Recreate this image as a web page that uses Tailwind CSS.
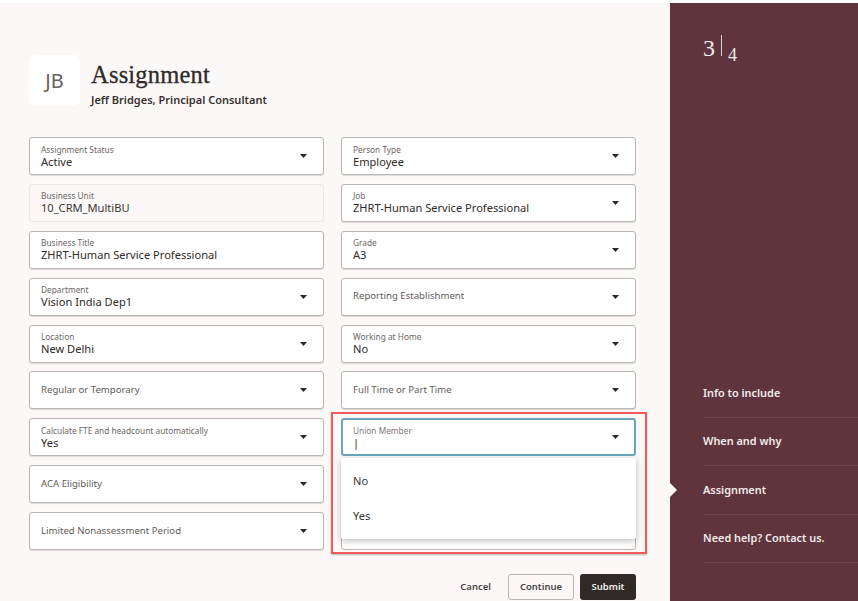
<!DOCTYPE html>
<html>
<head>
<meta charset="utf-8">
<script src="https://cdn.jsdelivr.net/npm/@tailwindcss/browser@4"></script>
</head>
<body class="bg-white">
<div class="relative w-[858px] h-[601px] overflow-hidden pt-[3px] font-['Noto_Sans','Lato',sans-serif]">
  <div class="flex h-[598px]">
    <main class="w-[670px] bg-[#fbf8f7] pl-[29px] pr-[34px] pt-[52px] flex flex-col">
      <header class="flex items-start h-[51px] gap-[11px]">
        <div class="w-[51px] h-[51px] rounded-md bg-white flex items-center justify-center text-[20px] text-[#65605d] pt-px">JB</div>
        <div class="flex flex-col mt-[6px]">
          <h1 class="font-['Liberation_Serif',serif] text-[24.5px] leading-[28px] text-[#2f2a28] tracking-[0.2px] [-webkit-text-stroke:0.3px_#2f2a28]">Assignment</h1>
          <p class="mt-[3px] text-[11px] leading-[16px] font-semibold text-[#36312f]">Jeff Bridges, Principal Consultant</p>
        </div>
      </header>

      <div class="grid grid-cols-2 gap-x-[17px] gap-y-[8.9px] mt-[31px]">
        <div class="h-[38px] rounded-[3px] border border-[#bab6b3] bg-white shadow-[0_1px_1px_rgba(0,0,0,0.12)] flex items-center pl-[11px] pr-[16px]"><div class="flex-1 min-w-0"><div class="text-[8.3px] leading-[10px] text-[#6b6663]">Assignment Status</div><div class="text-[11.1px] leading-[13px] text-[#2f2a28]">Active</div></div><svg class="w-[7px] h-[4px]" viewBox="0 0 7 4"><path d="M0 0h7L3.5 4z" fill="#2a2725"/></svg></div>
        <div class="h-[38px] rounded-[3px] border border-[#bab6b3] bg-white shadow-[0_1px_1px_rgba(0,0,0,0.12)] flex items-center pl-[11px] pr-[16px]"><div class="flex-1 min-w-0"><div class="text-[8.3px] leading-[10px] text-[#6b6663]">Person Type</div><div class="text-[11.1px] leading-[13px] text-[#2f2a28]">Employee</div></div><svg class="w-[7px] h-[4px]" viewBox="0 0 7 4"><path d="M0 0h7L3.5 4z" fill="#2a2725"/></svg></div>

        <div class="h-[38px] rounded-[3px] border border-[#ebe8e5] bg-[#fbf8f7] flex items-center pl-[11px] pr-[16px]"><div class="flex-1 min-w-0"><div class="text-[8.3px] leading-[10px] text-[#6b6663]">Business Unit</div><div class="text-[11.1px] leading-[13px] text-[#3a3533]">10_CRM_MultiBU</div></div></div>
        <div class="h-[38px] rounded-[3px] border border-[#bab6b3] bg-white shadow-[0_1px_1px_rgba(0,0,0,0.12)] flex items-center pl-[11px] pr-[16px]"><div class="flex-1 min-w-0"><div class="text-[8.3px] leading-[10px] text-[#6b6663]">Job</div><div class="text-[11.1px] leading-[13px] text-[#2f2a28]">ZHRT-Human Service Professional</div></div><svg class="w-[7px] h-[4px]" viewBox="0 0 7 4"><path d="M0 0h7L3.5 4z" fill="#2a2725"/></svg></div>

        <div class="h-[38px] rounded-[3px] border border-[#bab6b3] bg-white shadow-[0_1px_1px_rgba(0,0,0,0.12)] flex items-center pl-[11px] pr-[16px]"><div class="flex-1 min-w-0"><div class="text-[8.3px] leading-[10px] text-[#6b6663]">Business Title</div><div class="text-[11.1px] leading-[13px] text-[#2f2a28]">ZHRT-Human Service Professional</div></div></div>
        <div class="h-[38px] rounded-[3px] border border-[#bab6b3] bg-white shadow-[0_1px_1px_rgba(0,0,0,0.12)] flex items-center pl-[11px] pr-[16px]"><div class="flex-1 min-w-0"><div class="text-[8.3px] leading-[10px] text-[#6b6663]">Grade</div><div class="text-[11.1px] leading-[13px] text-[#2f2a28]">A3</div></div><svg class="w-[7px] h-[4px]" viewBox="0 0 7 4"><path d="M0 0h7L3.5 4z" fill="#2a2725"/></svg></div>

        <div class="h-[38px] rounded-[3px] border border-[#bab6b3] bg-white shadow-[0_1px_1px_rgba(0,0,0,0.12)] flex items-center pl-[11px] pr-[16px]"><div class="flex-1 min-w-0"><div class="text-[8.3px] leading-[10px] text-[#6b6663]">Department</div><div class="text-[11.1px] leading-[13px] text-[#2f2a28]">Vision India Dep1</div></div><svg class="w-[7px] h-[4px]" viewBox="0 0 7 4"><path d="M0 0h7L3.5 4z" fill="#2a2725"/></svg></div>
        <div class="h-[38px] rounded-[3px] border border-[#bab6b3] bg-white shadow-[0_1px_1px_rgba(0,0,0,0.12)] flex items-center pl-[11px] pr-[16px]"><div class="flex-1 min-w-0 text-[9.6px] text-[#5f5a57]">Reporting Establishment</div><svg class="w-[7px] h-[4px]" viewBox="0 0 7 4"><path d="M0 0h7L3.5 4z" fill="#2a2725"/></svg></div>

        <div class="h-[38px] rounded-[3px] border border-[#bab6b3] bg-white shadow-[0_1px_1px_rgba(0,0,0,0.12)] flex items-center pl-[11px] pr-[16px]"><div class="flex-1 min-w-0"><div class="text-[8.3px] leading-[10px] text-[#6b6663]">Location</div><div class="text-[11.1px] leading-[13px] text-[#2f2a28]">New Delhi</div></div><svg class="w-[7px] h-[4px]" viewBox="0 0 7 4"><path d="M0 0h7L3.5 4z" fill="#2a2725"/></svg></div>
        <div class="h-[38px] rounded-[3px] border border-[#bab6b3] bg-white shadow-[0_1px_1px_rgba(0,0,0,0.12)] flex items-center pl-[11px] pr-[16px]"><div class="flex-1 min-w-0"><div class="text-[8.3px] leading-[10px] text-[#6b6663]">Working at Home</div><div class="text-[11.1px] leading-[13px] text-[#2f2a28]">No</div></div><svg class="w-[7px] h-[4px]" viewBox="0 0 7 4"><path d="M0 0h7L3.5 4z" fill="#2a2725"/></svg></div>

        <div class="h-[38px] rounded-[3px] border border-[#bab6b3] bg-white shadow-[0_1px_1px_rgba(0,0,0,0.12)] flex items-center pl-[11px] pr-[16px]"><div class="flex-1 min-w-0 text-[9.6px] text-[#5f5a57]">Regular or Temporary</div><svg class="w-[7px] h-[4px]" viewBox="0 0 7 4"><path d="M0 0h7L3.5 4z" fill="#2a2725"/></svg></div>
        <div class="h-[38px] rounded-[3px] border border-[#bab6b3] bg-white shadow-[0_1px_1px_rgba(0,0,0,0.12)] flex items-center pl-[11px] pr-[16px]"><div class="flex-1 min-w-0 text-[9.6px] text-[#5f5a57]">Full Time or Part Time</div><svg class="w-[7px] h-[4px]" viewBox="0 0 7 4"><path d="M0 0h7L3.5 4z" fill="#2a2725"/></svg></div>

        <div class="h-[38px] rounded-[3px] border border-[#bab6b3] bg-white shadow-[0_1px_1px_rgba(0,0,0,0.12)] flex items-center pl-[11px] pr-[16px]"><div class="flex-1 min-w-0"><div class="text-[8.3px] leading-[10px] text-[#6b6663]">Calculate FTE and headcount automatically</div><div class="text-[11.1px] leading-[13px] text-[#2f2a28]">Yes</div></div><svg class="w-[7px] h-[4px]" viewBox="0 0 7 4"><path d="M0 0h7L3.5 4z" fill="#2a2725"/></svg></div>
        <div class="h-[38px] rounded-[3px] border-2 border-[#6aa6bb] bg-white flex items-center pl-[10px] pr-[15px]"><div class="flex-1 min-w-0"><div class="text-[8.3px] leading-[10px] text-[#7d7875]">Union Member</div><div class="text-[11.1px] leading-[13px] text-[#2f2a28]">|</div></div><svg class="w-[7px] h-[4px]" viewBox="0 0 7 4"><path d="M0 0h7L3.5 4z" fill="#2a2725"/></svg></div>

        <div class="h-[38px] rounded-[3px] border border-[#bab6b3] bg-white shadow-[0_1px_1px_rgba(0,0,0,0.12)] flex items-center pl-[11px] pr-[16px]"><div class="flex-1 min-w-0 text-[9.6px] text-[#5f5a57]">ACA Eligibility</div><svg class="w-[7px] h-[4px]" viewBox="0 0 7 4"><path d="M0 0h7L3.5 4z" fill="#2a2725"/></svg></div>
        <div class="h-[38px] rounded-[3px] border border-[#bab6b3] bg-white"></div>

        <div class="h-[38px] rounded-[3px] border border-[#bab6b3] bg-white shadow-[0_1px_1px_rgba(0,0,0,0.12)] flex items-center pl-[11px] pr-[16px]"><div class="flex-1 min-w-0 text-[9.6px] text-[#5f5a57]">Limited Nonassessment Period</div><svg class="w-[7px] h-[4px]" viewBox="0 0 7 4"><path d="M0 0h7L3.5 4z" fill="#2a2725"/></svg></div>
        <div class="h-[38px] rounded-[3px] border border-[#bab6b3] bg-white"></div>
      </div>

      <footer class="flex items-center justify-end mt-[24px] h-[26px] text-[9.5px] font-semibold">
        <span class="text-[#4a4543] mr-[17px]">Cancel</span>
        <span class="w-[66px] h-[26px] rounded-[3px] border border-[#bab6b3] flex items-center justify-center text-[#4a4543] mr-[6px]">Continue</span>
        <span class="w-[56px] h-[26px] rounded-[3px] bg-[#2f2a27] flex items-center justify-center text-[#f3f0ee]">Submit</span>
      </footer>
    </main>

    <aside class="relative w-[188px] bg-[#5f343d] flex flex-col pl-[33px] text-[#f2ecea]">
      <div class="flex items-start mt-[31px] font-['Liberation_Serif',serif]">
        <span class="text-[24px] leading-[28px]">3</span>
        <span class="w-px h-[21px] bg-[#d9cfcf] ml-[6px] mr-[6px] mt-px"></span>
        <span class="text-[18px] leading-[20px] mt-[11px]">4</span>
      </div>
      <nav class="mt-auto mb-[38px] text-[10.9px] font-semibold">
        <div class="h-[48.5px] flex items-center border-b border-[#6a424a]">Info to include</div>
        <div class="h-[48.5px] flex items-center border-b border-[#6a424a]">When and why</div>
        <div class="h-[48.5px] flex items-center border-b border-[#6a424a]">Assignment</div>
        <div class="h-[48.5px] flex items-center border-b border-[#6a424a]">Need help? Contact us.</div>
      </nav>
      <div class="absolute left-0 top-[480px] w-0 h-0 border-y-[7px] border-y-transparent border-l-[7px] border-l-[#fbf8f7]"></div>
    </aside>
  </div>

  <div class="absolute left-[331px] top-[412px] w-[316px] h-[142px] border-2 border-[#ee5c5c] shadow-[0_1px_2px_rgba(0,0,0,0.25)] pointer-events-none"></div>
  <div class="absolute left-[341px] top-[458px] w-[295px] h-[81px] bg-white rounded-[2px] shadow-[0_2px_6px_rgba(0,0,0,0.25)] text-[11.1px] text-[#3a3533] pl-[12px] flex flex-col">
    <div class="h-[17px] mt-[15px] flex items-center">No</div>
    <div class="h-[17px] mt-[18px] flex items-center">Yes</div>
  </div>
</div>
</body>
</html>
